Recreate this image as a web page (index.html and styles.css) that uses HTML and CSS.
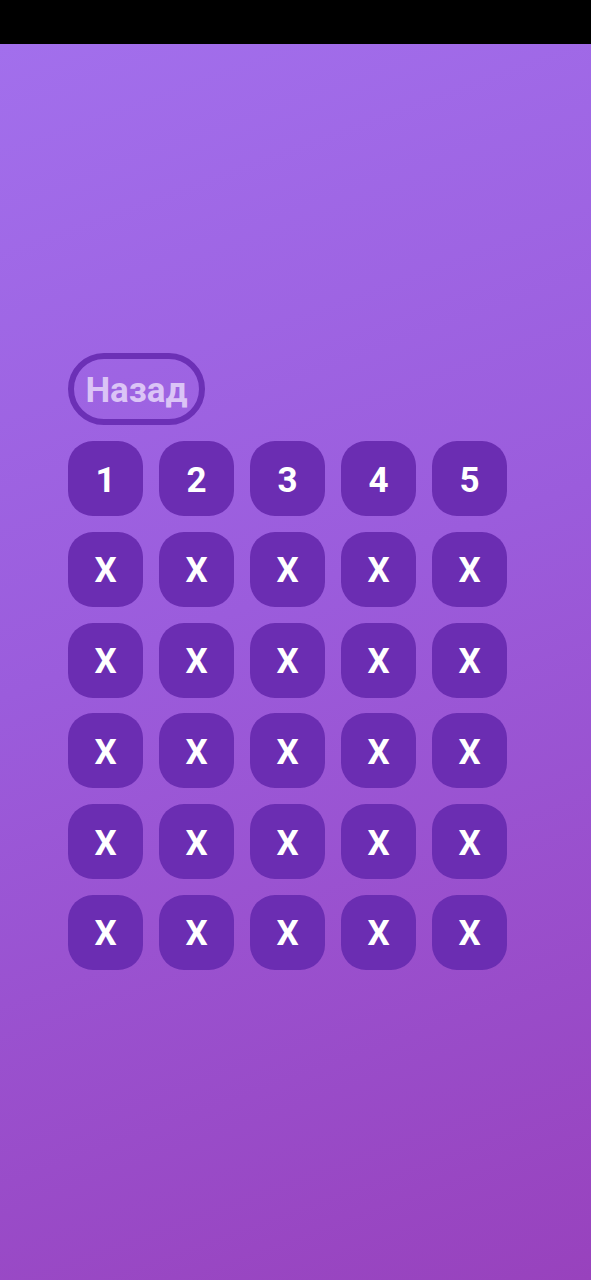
FILE: index.html
```html
<!DOCTYPE html>
<html lang="ru">
<head>
<meta charset="utf-8">
<link rel="stylesheet" href="styles.css">
</head>
<body>
<div class="statusbar"></div>
<main class="screen">
  <div class="content">
    <button class="back">Назад</button>
    <div class="grid">
      <div class="tile">1</div><div class="tile">2</div><div class="tile">3</div><div class="tile">4</div><div class="tile">5</div>
      <div class="tile">X</div><div class="tile">X</div><div class="tile">X</div><div class="tile">X</div><div class="tile">X</div>
      <div class="tile">X</div><div class="tile">X</div><div class="tile">X</div><div class="tile">X</div><div class="tile">X</div>
      <div class="tile">X</div><div class="tile">X</div><div class="tile">X</div><div class="tile">X</div><div class="tile">X</div>
      <div class="tile">X</div><div class="tile">X</div><div class="tile">X</div><div class="tile">X</div><div class="tile">X</div>
      <div class="tile">X</div><div class="tile">X</div><div class="tile">X</div><div class="tile">X</div><div class="tile">X</div>
    </div>
  </div>
</main>
</body>
</html>
```
FILE: styles.css
```css
* { box-sizing: border-box; }
html, body { margin: 0; padding: 0; }
body {
  width: 591px;
  height: 1280px;
  overflow: hidden;
  font-family: Roboto, "Liberation Sans", sans-serif;
  background: #000;
}
.statusbar {
  height: 44px;
  background: #000;
}
.screen {
  height: 1236px;
  background: linear-gradient(160deg, #a26fec 0%, #9b5cdc 45%, #9842bd 100%);
  padding: 309px 0 0 68px;
}
.content {
  display: flex;
  flex-direction: column;
  align-items: flex-start;
  gap: 16px;
}
.back {
  width: 137px;
  height: 72px;
  border: 6px solid #6c30b6;
  border-radius: 36px;
  background: transparent;
  color: #dbc4f6;
  font-family: Roboto, "Liberation Sans", sans-serif;
  font-weight: 700;
  font-size: 35px;
  padding: 3px 0 0;
  display: flex;
  align-items: center;
  justify-content: center;
}
.grid {
  display: grid;
  grid-template-columns: repeat(5, 75px);
  grid-auto-rows: 75px;
  column-gap: 16px;
  row-gap: 15.8px;
}
.tile {
  background: #6b2db2;
  border-radius: 25px;
  color: #fff;
  font-weight: 700;
  font-size: 35px;
  padding-top: 3px;
  display: flex;
  align-items: center;
  justify-content: center;
}
```
